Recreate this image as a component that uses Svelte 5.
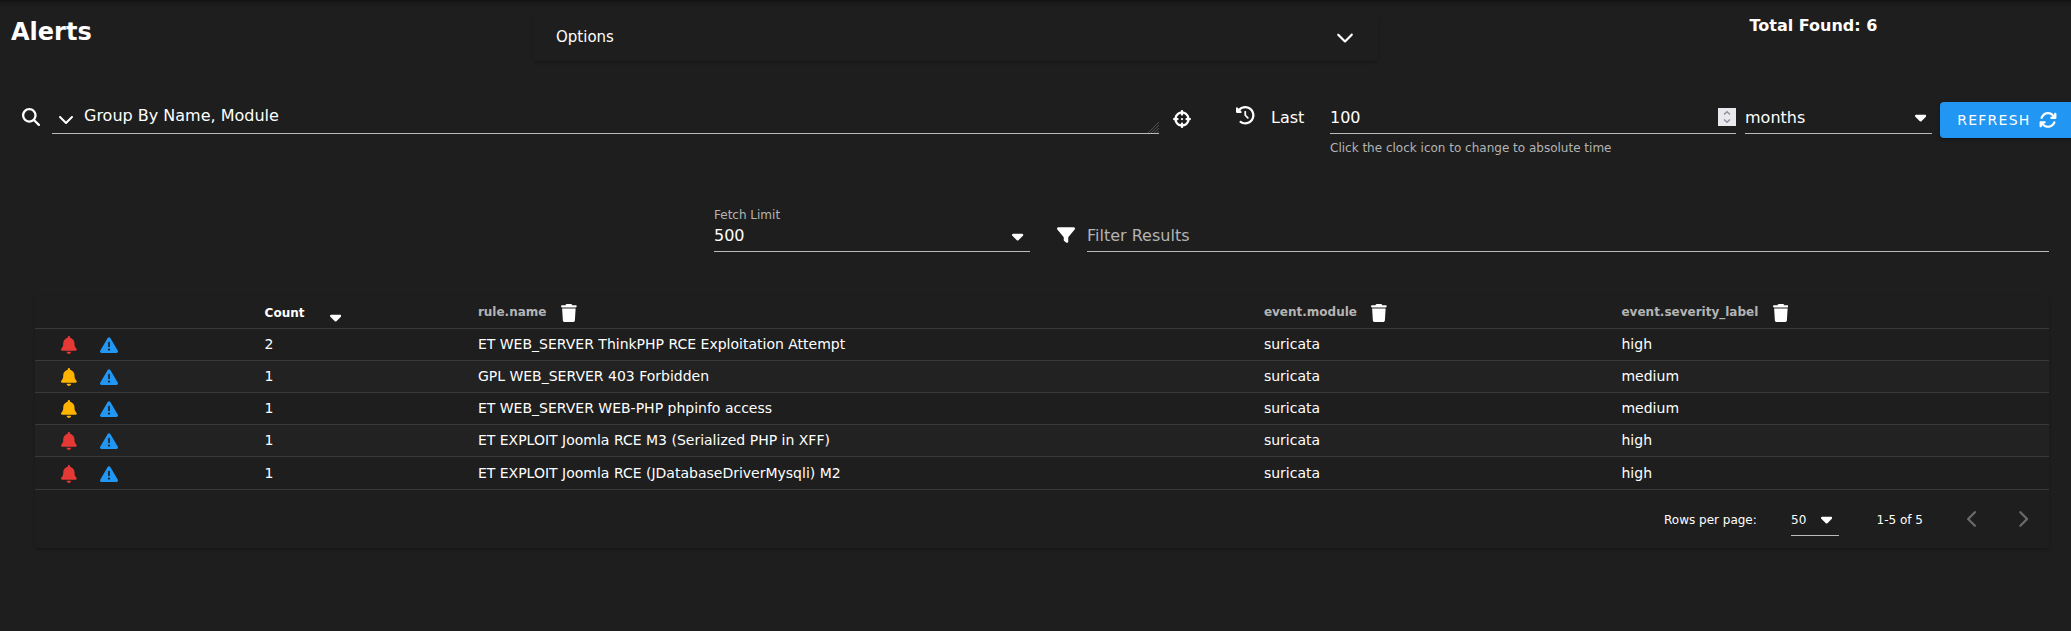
<script>
  const icons = {
    search: [512, 'M416 208c0 45.9-14.9 88.3-40 122.7L502.6 457.4c12.5 12.5 12.5 32.8 0 45.3s-32.8 12.5-45.3 0L330.7 376c-34.4 25.2-76.8 40-122.7 40C93.1 416 0 322.9 0 208S93.1 0 208 0S416 93.1 416 208zM208 352a144 144 0 1 0 0-288 144 144 0 1 0 0 288z'],
    down: [512, 'M233.4 406.6c12.5 12.5 32.8 12.5 45.3 0l192-192c12.5-12.5 12.5-32.8 0-45.3s-32.8-12.5-45.3 0L256 338.7 86.6 169.4c-12.5-12.5-32.8-12.5-45.3 0s-12.5 32.8 0 45.3l192 192z'],
    left: [320, 'M9.4 233.4c-12.5 12.5-12.5 32.8 0 45.3l192 192c12.5 12.5 32.8 12.5 45.3 0s12.5-32.8 0-45.3L77.3 256 246.6 86.6c12.5-12.5 12.5-32.8 0-45.3s-32.8-12.5-45.3 0l-192 192z'],
    right: [320, 'M310.6 233.4c12.5 12.5 12.5 32.8 0 45.3l-192 192c-12.5 12.5-32.8 12.5-45.3 0s-12.5-32.8 0-45.3L242.7 256 73.4 86.6c-12.5-12.5-12.5-32.8 0-45.3s32.8-12.5 45.3 0l192 192z'],
    caret: [320, 'M137.4 374.6c12.5 12.5 32.8 12.5 45.3 0l128-128c9.2-9.2 11.9-22.9 6.9-34.9s-16.6-19.8-29.6-19.8L32 192c-12.9 0-24.6 7.8-29.6 19.8s-2.2 25.7 6.9 34.9l128 128z'],
    crosshairs: [512, 'M256 0c17.7 0 32 14.3 32 32V42.4c93.7 13.9 167.7 88 181.6 181.6H480c17.7 0 32 14.3 32 32s-14.3 32-32 32H469.6c-13.9 93.7-88 167.7-181.6 181.6V480c0 17.7-14.3 32-32 32s-32-14.3-32-32V469.6C130.3 455.7 56.3 381.7 42.4 288H32c-17.7 0-32-14.3-32-32s14.3-32 32-32H42.4C56.3 130.3 130.3 56.3 224 42.4V32c0-17.7 14.3-32 32-32zM107.4 288c12.5 58.3 58.4 104.1 116.6 116.6V384c0-17.7 14.3-32 32-32s32 14.3 32 32v20.6c58.3-12.5 104.1-58.4 116.6-116.6H384c-17.7 0-32-14.3-32-32s14.3-32 32-32h20.6C392.1 165.7 346.3 119.9 288 107.4V128c0 17.7-14.3 32-32 32s-32-14.3-32-32V107.4C165.7 119.9 119.9 165.7 107.4 224H128c17.7 0 32 14.3 32 32s-14.3 32-32 32H107.4zM256 224a32 32 0 1 1 0 64 32 32 0 1 1 0-64z'],
    history: [512, 'M75 75L41 41C25.9 25.9 0 36.6 0 57.9V168c0 13.3 10.7 24 24 24H134.1c21.4 0 32.1-25.9 17-41l-30.8-30.8C155 85.5 203 64 256 64c106 0 192 86 192 192s-86 192-192 192c-40.8 0-78.6-12.7-109.7-34.4c-14.5-10.1-34.4-6.6-44.6 7.9s-6.6 34.4 7.9 44.6C151.2 495 201.7 512 256 512c141.4 0 256-114.6 256-256S397.4 0 256 0C185.3 0 121.3 28.7 75 75zm181 53c-13.3 0-24 10.7-24 24V256c0 6.4 2.5 12.5 7 17l72 72c9.4 9.4 24.6 9.4 33.9 0s9.4-24.6 0-33.9l-65-65V152c0-13.3-10.7-24-24-24z'],
    refresh: [512, 'M105.1 202.6c7.7-21.8 20.2-42.3 37.8-59.8c62.5-62.5 163.8-62.5 226.3 0L386.3 160H352c-17.7 0-32 14.3-32 32s14.3 32 32 32H463.5h.4c17.7 0 32-14.3 32-32V80c0-17.7-14.3-32-32-32s-32 14.3-32 32v35.2L414.4 97.6c-87.5-87.5-229.3-87.5-316.8 0C73.2 122 55.6 150.7 44.8 181.4c-5.9 16.7 2.9 34.9 19.5 40.8s34.9-2.9 40.8-19.5zM39 289.3c-5 1.5-9.8 4.2-13.7 8.2c-4 4-6.7 8.8-8.1 14c-.3 1.2-.6 2.5-.8 3.8c-.3 1.7-.4 3.4-.4 5.1V432c0 17.7 14.3 32 32 32s32-14.3 32-32V396.9l17.6 17.5c87.5 87.4 229.3 87.4 316.7 0c24.4-24.4 42.1-53.1 52.9-83.7c5.9-16.7-2.9-34.9-19.5-40.8s-34.9 2.9-40.8 19.5c-7.7 21.8-20.2 42.3-37.8 59.8c-62.5 62.5-163.8 62.5-226.3 0l-.1-.1L125.6 352H160c17.7 0 32-14.3 32-32s-14.3-32-32-32H48.4c-1.6 0-3.2 .1-4.8 .3s-3.1 .5-4.6 1z'],
    filter: [512, 'M3.9 54.9C10.5 40.9 24.5 32 40 32H472c15.5 0 29.5 8.9 36.1 22.9s4.6 30.5-5.2 42.5L320 320.9V448c0 12.1-6.8 23.2-17.7 28.6s-23.8 4.3-33.5-3l-64-48c-8.1-6-12.8-15.5-12.8-25.6V320.9L9 97.3C-.7 85.4-2.8 68.8 3.9 54.9z'],
    trash: [448, 'M135.2 17.7L128 32H32C14.3 32 0 46.3 0 64S14.3 96 32 96H416c17.7 0 32-14.3 32-32s-14.3-32-32-32H320l-7.2-14.3C307.4 6.8 296.3 0 284.2 0H163.8c-12.1 0-23.2 6.8-28.6 17.7zM416 128H32L53.2 467c1.6 25.3 22.6 45 47.9 45H346.9c25.3 0 46.3-19.7 47.9-45L416 128z'],
    bell: [448, 'M224 0c-17.7 0-32 14.3-32 32V51.2C119 66 64 130.6 64 208v18.8c0 47-17.3 92.4-48.5 127.6l-7.4 8.3c-8.4 9.4-10.4 22.9-5.3 34.4S19.4 416 32 416H416c12.6 0 24-7.4 29.2-18.9s3.1-25-5.3-34.4l-7.4-8.3C401.3 319.2 384 273.9 384 226.8V208c0-77.4-55-142-128-156.8V32c0-17.7-14.3-32-32-32zm45.3 493.3c12-12 18.7-28.3 18.7-45.3H224 160c0 17 6.7 33.3 18.7 45.3s28.3 18.7 45.3 18.7s33.3-6.7 45.3-18.7z'],
    warning: [512, 'M256 32c14.2 0 27.3 7.5 34.5 19.8l216 368c7.3 12.4 7.3 27.7 .2 40.1S486.3 480 472 480H40c-14.3 0-27.6-7.7-34.7-20.1s-7-27.8 .2-40.1l216-368C228.7 39.5 241.8 32 256 32zm0 128c-13.3 0-24 10.7-24 24V296c0 13.3 10.7 24 24 24s24-10.7 24-24V184c0-13.3-10.7-24-24-24zm32 224a32 32 0 1 0 -64 0 32 32 0 1 0 64 0z']
  };

  const rows = [
    { count: 2, name: 'ET WEB_SERVER ThinkPHP RCE Exploitation Attempt', module: 'suricata', severity: 'high' },
    { count: 1, name: 'GPL WEB_SERVER 403 Forbidden', module: 'suricata', severity: 'medium' },
    { count: 1, name: 'ET WEB_SERVER WEB-PHP phpinfo access', module: 'suricata', severity: 'medium' },
    { count: 1, name: 'ET EXPLOIT Joomla RCE M3 (Serialized PHP in XFF)', module: 'suricata', severity: 'high' },
    { count: 1, name: 'ET EXPLOIT Joomla RCE (JDatabaseDriverMysqli) M2', module: 'suricata', severity: 'high' }
  ];
  const fields = ['rule.name', 'event.module', 'event.severity_label'];
</script>

{#snippet icon(name, size = 18)}
  <svg class="icon {name}" viewBox="0 0 {icons[name][0]} 512" width={(icons[name][0] / 512) * size} height={size} aria-hidden="true">
    <path fill="currentColor" d={icons[name][1]} />
  </svg>
{/snippet}

<main>
  <header>
    <h1>Alerts</h1>
    <div class="options">
      <span>Options</span>
      {@render icon('down')}
    </div>
    <div class="total">Total Found: 6</div>
  </header>

  <section class="query">
    <div class="lead">{@render icon('search')}</div>
    <div class="field group">
      {@render icon('down', 16)}
      <span>Group By Name, Module</span>
      <svg class="grip" width="11" height="11" viewBox="0 0 11 11" aria-hidden="true">
        <path d="M0 11L11 0M3 11L11 3M6 11L11 6M9 11L11 9" stroke="#666" stroke-width=".7" />
      </svg>
    </div>
    <div class="hunt">{@render icon('crosshairs')}</div>
    <div class="clock">{@render icon('history', 18.5)}</div>
    <div class="last">Last</div>
    <div class="duration">
      <div class="field amount">
        <span>100</span>
        <svg class="spinner" width="18" height="18" viewBox="0 0 18 18" aria-hidden="true">
          <rect width="18" height="18" fill="#e9e9ed" />
          <path d="M6 6.5L9 3.7L12 6.5M6 11.5L9 14.3L12 11.5" fill="none" stroke="#8f8f9d" stroke-width="1.5" />
        </svg>
      </div>
      <div class="hint">Click the clock icon to change to absolute time</div>
    </div>
    <div class="field units">
      <span>months</span>
      {@render icon('caret')}
    </div>
    <button>REFRESH {@render icon('refresh')}</button>
  </section>

  <section class="filters">
    <div class="limit">
      <div class="label">Fetch Limit</div>
      <div class="field value">
        <span>500</span>
        {@render icon('caret')}
      </div>
    </div>
    <div class="funnel">{@render icon('filter')}</div>
    <div class="field results">Filter Results</div>
  </section>

  <section class="table">
    <div class="row head">
      <div></div>
      <div class="sorted">Count {@render icon('caret')}</div>
      {#each fields as field}
        <div class="column">{field} {@render icon('trash')}</div>
      {/each}
    </div>
    {#each rows as row}
      <div class="row">
        <div class="actions {row.severity}">
          {@render icon('bell')}
          {@render icon('warning')}
        </div>
        <div>{row.count}</div>
        <div>{row.name}</div>
        <div>{row.module}</div>
        <div>{row.severity}</div>
      </div>
    {/each}
    <footer>
      <span class="per-page">Rows per page:</span>
      <div class="page-size"><span>50</span>{@render icon('caret')}</div>
      <span class="range">1-5 of 5</span>
      <div class="pager">{@render icon('left')}{@render icon('right')}</div>
    </footer>
  </section>
</main>

<style>
  :global(body) {
    background: #1e1e1e;
    overflow: hidden;
  }
  * {
    box-sizing: border-box;
  }
  main {
    width: 2071px;
    height: 631px;
    overflow: hidden;
    display: flex;
    flex-direction: column;
    color: #fff;
    background: linear-gradient(#11110f, #171717 2px, #1b1b1b 4px, #1e1e1e 9px);
    font-family: "DejaVu Sans", sans-serif;
    font-size: 16px;
    line-height: 24px;
    white-space: nowrap;
  }
  .icon,
  .grip,
  .spinner {
    display: block;
    flex: none;
  }
  header {
    display: flex;
    align-items: flex-start;
    height: 102px;
    padding-left: 11px;
  }
  h1 {
    margin: 16px 0 0;
    width: 522px;
    font-size: 24px;
    line-height: 32px;
  }
  .options,
  .table {
    border-radius: 4px;
    box-shadow: 0 3px 1px -2px rgba(0, 0, 0, 0.12), 0 2px 2px rgba(0, 0, 0, 0.08), 0 1px 4px rgba(0, 0, 0, 0.06);
  }
  .options {
    display: flex;
    align-items: center;
    justify-content: space-between;
    width: 845px;
    height: 48px;
    margin-top: 13px;
    padding: 0 24px 0 23px;
    font-size: 15px;
  }
  .total {
    margin: 13.5px 0 0 371.5px;
    font-weight: bold;
  }
  .query {
    display: flex;
    align-items: flex-start;
    height: 104px;
  }
  .query > * {
    flex: none;
  }
  .field {
    display: flex;
    align-items: flex-start;
    border-bottom: 1px solid #bbb;
  }
  .lead {
    width: 52px;
    padding: 6px 0 0 21.8px;
  }
  .group {
    width: 1107px;
    height: 32px;
    padding: 1.5px 0 0 5.8px;
  }
  .group .icon {
    margin: 7px 10.2px 0 0;
  }
  .group .grip {
    margin: 18.5px 0 0 auto;
  }
  .hunt {
    width: 64px;
    padding: 8px 0 0 13.8px;
  }
  .clock {
    width: 48px;
    padding: 4px 0 0 13.2px;
  }
  .last {
    width: 59px;
    padding-top: 3.5px;
  }
  .duration {
    width: 406px;
  }
  .amount {
    height: 32px;
    justify-content: space-between;
    padding-top: 3.5px;
  }
  .spinner {
    margin-top: 2.5px;
  }
  .hint,
  .label {
    font-size: 12px;
    line-height: 16px;
    color: #b4b4b4;
  }
  .hint {
    margin-top: 6px;
  }
  .units {
    width: 187px;
    height: 32px;
    margin-left: 9px;
    padding: 3.5px 6px 0 0;
    justify-content: space-between;
  }
  .units .icon {
    margin-top: 2.8px;
  }
  button {
    display: flex;
    align-items: center;
    width: 135px;
    height: 36px;
    margin-left: 8px;
    padding: 0 0 0 17.2px;
    border: 0;
    border-radius: 4px;
    background: #2196f3;
    color: #fff;
    font: 14px "DejaVu Sans", sans-serif;
    letter-spacing: 1.25px;
    box-shadow: 0 3px 1px -2px rgba(0, 0, 0, 0.2), 0 2px 2px rgba(0, 0, 0, 0.14), 0 1px 5px rgba(0, 0, 0, 0.12);
  }
  button .icon {
    margin-left: 8.7px;
  }
  .filters {
    display: flex;
    align-items: flex-start;
    height: 90px;
    padding-left: 714px;
  }
  .limit {
    width: 316px;
    height: 46px;
  }
  .label {
    height: 18px;
    padding-top: 1px;
  }
  .value {
    height: 28px;
    justify-content: space-between;
    padding-right: 6.5px;
  }
  .value span {
    margin-top: -0.5px;
  }
  .value .icon {
    margin-top: 2.5px;
  }
  .funnel {
    width: 57px;
    padding: 20.2px 0 0 27px;
  }
  .results {
    width: 962px;
    height: 46px;
    padding-top: 17.5px;
    color: #b4b4b4;
  }
  .table {
    width: 2014px;
    height: 252px;
    margin-left: 35px;
    font-size: 14px;
    line-height: 20px;
  }
  .row {
    display: grid;
    grid-template-columns: 229.6px 213.3px 786px 357.6px 1fr;
    height: 32px;
    padding-top: 5px;
    border-bottom: 1px solid #393939;
  }
  .row:nth-child(odd) {
    background: #222;
  }
  .row.head {
    height: 33px;
    padding-top: 6px;
    background: none;
    font-size: 12px;
    font-weight: bold;
  }
  .row:nth-child(6) {
    height: 33px;
    padding-top: 6px;
  }
  .sorted,
  .column {
    display: flex;
    align-items: flex-start;
  }
  .sorted {
    padding-top: 1px;
  }
  .sorted .icon {
    margin: 5.3px 0 0 25.2px;
  }
  .column {
    color: #b4b4b4;
  }
  .column .icon {
    color: #fff;
    margin: 2.2px 0 0 14.4px;
  }
  .actions {
    display: flex;
    gap: 23.4px;
    padding: 2px 0 0 26.3px;
    color: #e53935;
  }
  .actions.medium {
    color: #ffb300;
  }
  .actions :global(.warning) {
    color: #2196f3;
  }
  footer {
    display: flex;
    align-items: flex-start;
    height: 58px;
    padding-top: 20px;
    font-size: 12px;
  }
  .per-page {
    margin-left: 1629px;
    width: 127px;
  }
  .page-size {
    display: flex;
    justify-content: space-between;
    width: 48px;
    height: 26px;
    padding-right: 6.6px;
    border-bottom: 1px solid #bbb;
  }
  .page-size .icon {
    margin-top: 0.3px;
  }
  .range {
    margin-left: 37.5px;
    width: 90.8px;
  }
  .pager {
    display: flex;
    gap: 38.8px;
    padding-top: 0.2px;
    color: #6a6a6a;
  }
</style>
